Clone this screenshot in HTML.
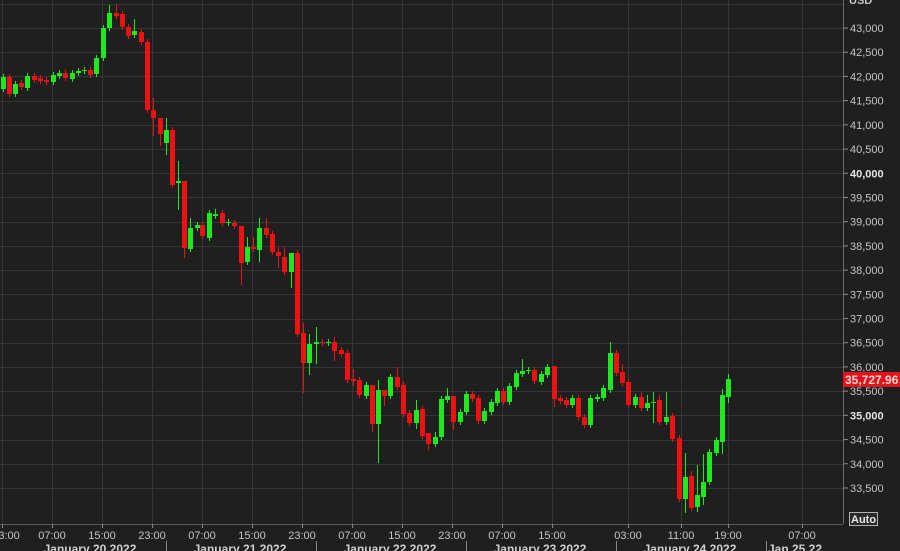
<!DOCTYPE html>
<html><head><meta charset="utf-8"><style>
html,body{margin:0;padding:0;background:#1f1f20;width:900px;height:551px;overflow:hidden;font-family:"Liberation Sans",sans-serif}
svg{position:absolute;left:0;top:0}
</style></head><body>
<svg id="s" width="900" height="551" xmlns="http://www.w3.org/2000/svg">
<rect width="900" height="551" fill="#1f1f20"/>
<g id="grid" stroke="#363636" stroke-width="1"></g>
<g id="c"></g>
<line x1="843.5" y1="0" x2="843.5" y2="524" stroke="#6a6a6a"/>
<line x1="0" y1="524.5" x2="843" y2="524.5" stroke="#5a5a5a"/>
<g id="ax" font-size="11" fill="#c4c4c4"></g>
<text x="849" y="4" font-size="11" fill="#c4c4c4" font-weight="bold">USD</text>
<rect x="843" y="372" width="57" height="15" fill="#e0141a"/>
<text x="845" y="384" font-size="12" fill="#ffd6d6" font-weight="bold">35,727.96</text>
<rect x="849.5" y="512.5" width="28" height="13" fill="#2a2a2a" stroke="#b0b0b0"/>
<text x="851" y="523" font-size="11" fill="#e8e8e8" font-weight="bold">Auto</text>
<g id="tx" font-size="11" fill="#c4c4c4" text-anchor="middle"></g>
</svg>
<script>
var NS="http://www.w3.org/2000/svg";
function el(p,t,a,txt){var e=document.createElementNS(NS,t);for(var k in a)e.setAttribute(k,a[k]);if(txt)e.textContent=txt;document.getElementById(p).appendChild(e);}
for(var i=-1;i<=19;i++){var y=28+i*24.21;var p=43000-i*500;
 el('grid','line',{x1:0,x2:843,y1:Math.round(y)+.5,y2:Math.round(y)+.5});
 if(i>=0&&i<=19){el('ax','line',{x1:843,x2:848,y1:y,y2:y,stroke:'#8a8a8a'});
  var s=p.toLocaleString('en-US');
  el('ax','text',{x:850,y:y+4,'font-weight':(p%5000==0?'bold':'normal'),fill:(p%5000==0?'#e4e4e4':'#c4c4c4')},s);}
}
var times=['23:00','07:00','15:00','23:00','07:00','15:00','23:00','07:00','15:00','23:00','07:00','15:00','','03:00','11:00','19:00','','07:00'];
var tx=[2,52,102,152,202,252,302,352,402,452,502,552,0,628,681,728,0,802];
for(var j=0;j<times.length;j++){if(!times[j])continue;
 el('grid','line',{x1:tx[j]+.5,x2:tx[j]+.5,y1:0,y2:524});
 el('tx','text',{x:(j==0?6:tx[j]),y:539},times[j]);
 el('tx','line',{x1:tx[j]+.5,x2:tx[j]+.5,y1:524,y2:528,stroke:'#888'});}
var dates=[[90,'January 20 2022'],[240,'January 21 2022'],[390,'January 22 2022'],[540,'January 23 2022'],[690,'January 24 2022'],[795,'Jan 25 22']];
dates.forEach(function(d){el('tx','text',{x:d[0],y:553,'font-weight':'bold','font-size':12,fill:'#d0d0d0'},d[1]);});
[166,316,466,616,766].forEach(function(x){el('tx','line',{x1:x+.5,x2:x+.5,y1:541,y2:551,stroke:'#888'});});
var C=[[3,77,89,'g'],[9,77,94,'r'],[15,84,94,'g'],[21,83,87,'r'],[27,76,88,'g'],[34,76,80,'r'],[40,78,81,'r'],[46,80,82,'r'],[53,75,82,'g'],[59,73,76,'g'],[65,73,78,'r'],[72,73,79,'g'],[78,71,73,'g'],[84,70,71,'g'],[90,70,75,'r'],[96,58,74,'g'],[103,28,58,'g'],[109,13,28,'g',8],[116,13,16,'r',9],[122,14,27,'r'],[128,27,36,'r'],[134,31,35,'g',12],[141,32,42,'r'],[147,42,110,'r'],[153,110,118,'r',12,18],[160,118,134,'r',0,12],[166,130,143,'g',12,12],[172,130,185,'r'],[178,181,183,'g',20,27],[184,181,248,'r',0,10],[190,228,249,'g',10],
[197,225,228,'g'],[202,225,236,'r'],[209,213,238,'g'],[215,214,216,'g',5],[222,213,223,'r'],[228,222,223,'g'],[234,223,226,'r'],[241,226,263,'r',0,22],[247,247,262,'g',10],[253,247,249,'r',10],[259,228,250,'g',10,12],[266,228,235,'r',10],[272,234,252,'r'],[278,252,256,'r',5,12],[284,257,272,'r',10],[291,253,272,'g',0,16],[297,253,334,'r'],[303,333,363,'r',10,30],[309,344,363,'g',10,12],[316,342,344,'g',15,20],[322,342,343,'r'],[328,342,343,'g'],[334,342,351,'r',5,10],[341,350,354,'r'],[347,353,380,'r'],[353,379,381,'r',10,5],[359,380,395,'r'],[366,385,396,'g'],[372,385,424,'r',0,8],[378,390,424,'g',10,39],[384,390,396,'r',0,10],[390,377,396,'g'],[397,377,387,'r',10],[403,385,414,'r'],[409,413,423,'r'],[416,410,423,'g',10,6],[422,409,436,'r'],[428,433,444,'r',0,6],[435,437,444,'g',5],[441,399,437,'g'],[447,396,400,'g',8],[453,396,422,'r',0,8],[460,412,422,'g'],[466,394,412,'g'],[472,394,399,'r'],[478,398,421,'r'],[484,411,421,'g'],[491,402,412,'g'],[497,391,403,'g'],[503,391,402,'r'],[509,386,402,'g'],[516,373,387,'g'],[522,371,374,'g',12],[528,370,371,'g'],[534,370,381,'r'],[541,374,382,'g'],[547,367,375,'g'],[554,366,399,'r',0,8],[560,398,401,'r'],[566,400,405,'r'],[572,398,405,'g'],[578,398,417,'r'],[584,417,425,'r'],[590,398,425,'g'],[597,397,399,'g'],[603,388,398,'g'],[610,353,390,'g',11],[616,353,373,'r'],[622,372,383,'r',8],[628,382,405,'r'],[635,397,405,'g'],[641,397,408,'r',5],[647,403,408,'g',8],[653,402,403,'g',10,20],[659,400,422,'r',5],[666,417,422,'g',25],[672,416,439,'r'],[679,438,499,'r'],[685,477,499,'g',24,14],[691,476,508,'r',5],[697,495,507,'g',30,5],[703,482,497,'g',28,8],[709,452,482,'g'],[716,440,453,'g'],[722,395,442,'g',6,12],[728,379,397,'g',5,6]];
C.forEach(function(c){var col=c[3]=='g'?'#1ee81e':'#ee1111';var wt=c[4]!=null?c[4]:3,wb=c[5]!=null?c[5]:3;
 el('c','line',{x1:c[0]+.5,x2:c[0]+.5,y1:c[1]-wt,y2:c[2]+wb,stroke:col,'stroke-width':1});
 el('c','rect',{x:c[0]-2,y:c[1],width:5,height:Math.max(1,c[2]-c[1]),fill:col});});
</script>
</body></html>
